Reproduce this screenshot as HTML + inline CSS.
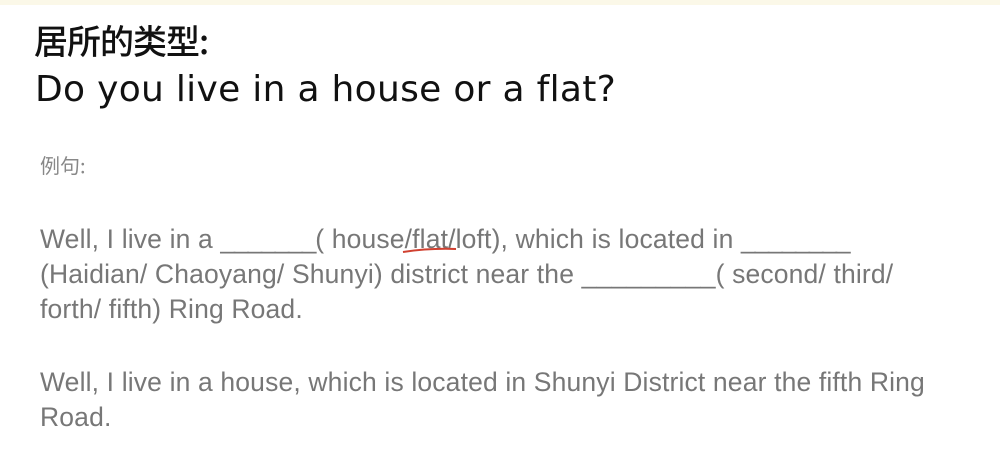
<!DOCTYPE html>
<html><head><meta charset="utf-8"><style>
body{margin:0;width:1000px;height:458px;background:#fff;position:relative;overflow:hidden}
.top{position:absolute;left:0;top:0;width:1000px;height:5px;background:#fbf8e8}
.t{position:absolute;white-space:nowrap}
.h1{left:34px;top:15px;font:500 34px "Noto Sans CJK SC",sans-serif;color:#111;letter-spacing:-1px}
.h2{left:35px;top:69px;font:36px "DejaVu Sans",sans-serif;color:#111;letter-spacing:0.3px}
.ex{left:40px;top:150px;font:20px "Noto Sans CJK SC",sans-serif;color:#888}
.p{left:40px;font:26.5px "Liberation Sans",sans-serif;color:#777;line-height:35px;letter-spacing:0.15px}
.u{letter-spacing:-1.2px}
</style></head><body>
<div class="top"></div>
<div class="t h1">居所的类型:</div>
<div class="t h2">Do you live in a house or a flat?</div>
<div class="t ex">例句:</div>
<div class="t p" style="top:222px">Well, I live in a <span class="u">_______</span>( house/flat/loft), which is located in <span class="u">________</span><br>(Haidian/ Chaoyang/ Shunyi) district near the _________( second/ third/<br>forth/ fifth) Ring Road.</div>
<svg style="position:absolute;left:400px;top:246px" width="60" height="10"><path d="M3 6 Q30 2 56 3" stroke="#d04030" stroke-width="2" fill="none"/></svg>
<div class="t p" style="top:365px">Well, I live in a house, which is located in Shunyi District near the fifth Ring<br>Road.</div>
</body></html>
